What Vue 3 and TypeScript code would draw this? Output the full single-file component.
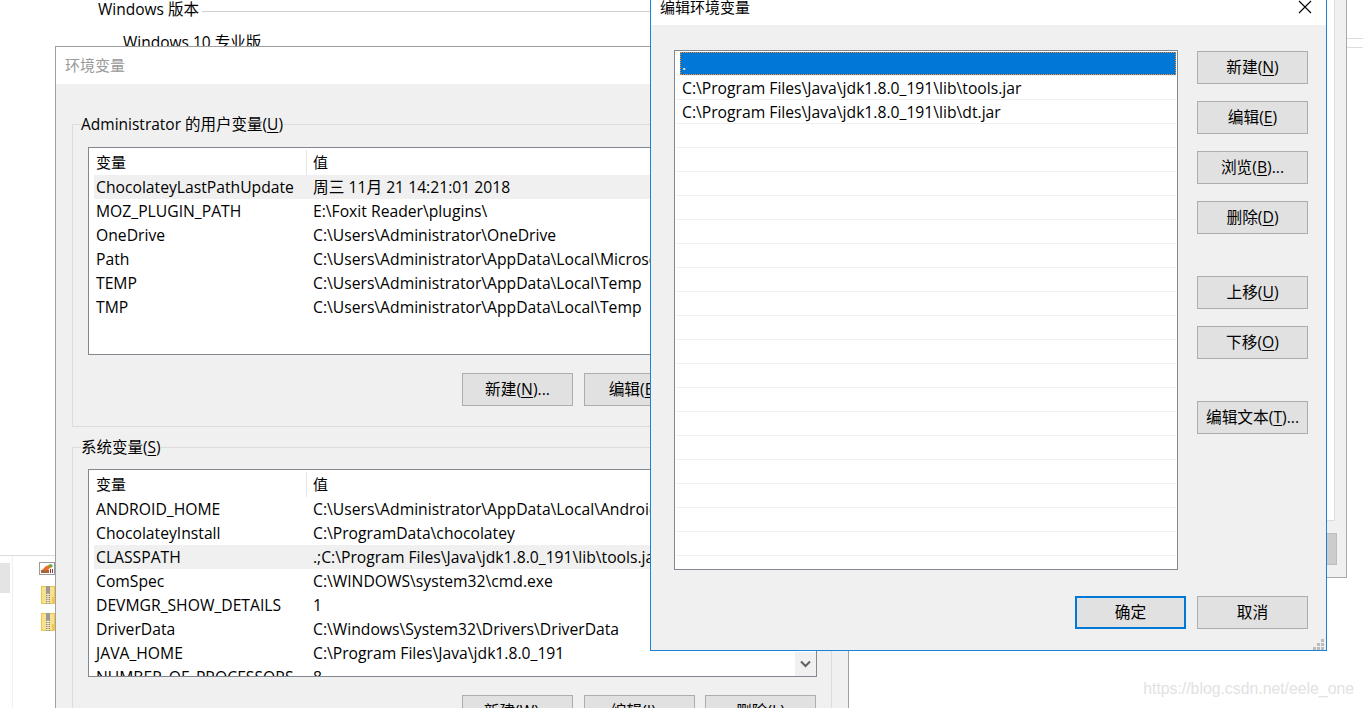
<script setup lang="ts">
interface EnvVar {
  name: string
  value: string
  hover?: boolean
}

const userVars: EnvVar[] = [
  { name: 'ChocolateyLastPathUpdate', value: '周三 11月 21 14:21:01 2018', hover: true },
  { name: 'MOZ_PLUGIN_PATH', value: 'E:\\Foxit Reader\\plugins\\' },
  { name: 'OneDrive', value: 'C:\\Users\\Administrator\\OneDrive' },
  { name: 'Path', value: 'C:\\Users\\Administrator\\AppData\\Local\\Microsoft\\WindowsApps' },
  { name: 'TEMP', value: 'C:\\Users\\Administrator\\AppData\\Local\\Temp' },
  { name: 'TMP', value: 'C:\\Users\\Administrator\\AppData\\Local\\Temp' }
]

const sysVars: EnvVar[] = [
  { name: 'ANDROID_HOME', value: 'C:\\Users\\Administrator\\AppData\\Local\\Android\\Sdk' },
  { name: 'ChocolateyInstall', value: 'C:\\ProgramData\\chocolatey' },
  { name: 'CLASSPATH', value: '.;C:\\Program Files\\Java\\jdk1.8.0_191\\lib\\tools.jar;C:\\Program Files', hover: true },
  { name: 'ComSpec', value: 'C:\\WINDOWS\\system32\\cmd.exe' },
  { name: 'DEVMGR_SHOW_DETAILS', value: '1' },
  { name: 'DriverData', value: 'C:\\Windows\\System32\\Drivers\\DriverData' },
  { name: 'JAVA_HOME', value: 'C:\\Program Files\\Java\\jdk1.8.0_191' },
  { name: 'NUMBER_OF_PROCESSORS', value: '8' }
]

const pathEntries: string[] = [
  '.',
  'C:\\Program Files\\Java\\jdk1.8.0_191\\lib\\tools.jar',
  'C:\\Program Files\\Java\\jdk1.8.0_191\\lib\\dt.jar',
  ...Array<string>(18).fill('')
]

const sideButtons = [
  { label: '新建(', key: 'N', tail: ')' },
  { label: '编辑(', key: 'E', tail: ')' },
  { label: '浏览(', key: 'B', tail: ')...' },
  { label: '删除(', key: 'D', tail: ')' },
  { label: '上移(', key: 'U', tail: ')', spaced: true },
  { label: '下移(', key: 'O', tail: ')' },
  { label: '编辑文本(', key: 'T', tail: ')...', spaced: true }
]

const gripDots: number[][] = [[8, 0], [4, 4], [8, 4], [0, 8], [4, 8], [8, 8]]
</script>

<template>
  <div class="desktop">
    <!-- windows behind the dialogs -->
    <div class="about">
      <div class="about-head"><span>Windows 版本</span><i></i></div>
      <div class="about-edition">Windows 10 专业版</div>
    </div>

    <div class="explorer">
      <div class="explorer-side">
        <div class="explorer-sel"></div>
      </div>
      <div class="explorer-files">
        <svg width="16" height="13" viewBox="0 0 16 13">
          <rect x="0.5" y="0.5" width="15" height="12" fill="#fff" stroke="#9a9a9a" />
          <rect x="2" y="8" width="8" height="3" fill="#a5673a" />
          <path d="M3 8l4-4 4-1 1 2-3 3z" fill="#e8702a" />
          <path d="M9 3l3-1 2 2-2 2z" fill="#6fa83a" />
          <rect x="11" y="7" width="1" height="4" fill="#c22" />
          <rect x="13" y="7" width="1" height="4" fill="#555" />
        </svg>
        <svg v-for="n in 2" :key="n" class="zip" width="14" height="18" viewBox="0 0 14 18">
          <rect x="0.5" y="0.5" width="13" height="17" fill="#f8e08c" stroke="#e9c64c" />
          <rect x="11" y="11" width="3" height="7" fill="#eec94f" />
          <rect x="5" y="0" width="4" height="7" fill="#9a9a9a" />
          <path d="M7 7v11" stroke="#8a8a8a" stroke-dasharray="1 1" stroke-width="4" />
          <path d="M7 7v11" stroke="#e8e8e8" stroke-width="1" />
        </svg>
      </div>
    </div>

    <div class="backdrop">
      <div class="backdrop-strip"></div>
      <div class="backdrop-btn"></div>
    </div>
    <div class="backdrop-lines"><i></i><i></i></div>

    <!-- 环境变量 -->
    <div class="env">
      <div class="env-title">环境变量</div>
      <div class="env-body">
        <fieldset class="group">
          <legend>Administrator 的用户变量(<u>U</u>)</legend>
          <div class="vars">
            <div class="vars-head"><span>变量</span><span class="col2">值</span></div>
            <div v-for="v in userVars" :key="v.name" class="vars-row" :class="{ hover: v.hover }">
              <span>{{ v.name }}</span><span class="col2">{{ v.value }}</span>
            </div>
          </div>
          <div class="env-actions">
            <button class="btn">新建(<u>N</u>)...</button>
            <button class="btn">编辑(<u>E</u>)...</button>
            <button class="btn">删除(<u>D</u>)</button>
          </div>
        </fieldset>

        <fieldset class="group group-sys">
          <legend>系统变量(<u>S</u>)</legend>
          <div class="vars">
            <div class="vars-head"><span>变量</span><span class="col2">值</span></div>
            <div v-for="v in sysVars" :key="v.name" class="vars-row" :class="{ hover: v.hover }">
              <span>{{ v.name }}</span><span class="col2">{{ v.value }}</span>
            </div>
            <div class="scroll-down">
              <svg width="11" height="8" viewBox="0 0 11 8">
                <path d="M1 1.5l4.5 4.5 4.5-4.5" fill="none" stroke="#606060" stroke-width="2" />
              </svg>
            </div>
          </div>
          <div class="env-actions">
            <button class="btn">新建(<u>W</u>)...</button>
            <button class="btn">编辑(<u>I</u>)...</button>
            <button class="btn">删除(<u>L</u>)</button>
          </div>
        </fieldset>
      </div>
    </div>

    <!-- 编辑环境变量 -->
    <div class="dialog">
      <div class="dialog-title">
        <span>编辑环境变量</span>
        <svg width="14" height="14" viewBox="0 0 14 14">
          <path d="M1 1l12 12M13 1L1 13" stroke="#000" stroke-width="1.1" />
        </svg>
      </div>
      <div class="dialog-body">
        <div class="dialog-main">
          <ul class="paths">
            <li v-for="(p, i) in pathEntries" :key="i">
              <span :class="{ sel: i === 0 }">{{ p }}</span>
            </li>
          </ul>
          <div class="dialog-side">
            <button v-for="b in sideButtons" :key="b.key" class="btn" :class="{ spaced: b.spaced }">
              {{ b.label }}<u>{{ b.key }}</u>{{ b.tail }}
            </button>
          </div>
        </div>
        <div class="dialog-foot">
          <button class="btn primary">确定</button>
          <button class="btn">取消</button>
        </div>
      </div>
      <svg class="grip" width="11" height="11" viewBox="0 0 11 11">
        <rect v-for="(d, i) in gripDots" :key="i" :x="d[0]" :y="d[1]" width="3" height="3" fill="#bcbcbc" />
      </svg>
    </div>

    <div class="watermark">https://blog.csdn.net/eele_one</div>
  </div>
</template>

<style scoped>
.desktop {
  position: relative;
  width: 1363px;
  height: 708px;
  overflow: hidden;
  background: #fff;
  color: #000;
  font-family: "Open Sans", "Noto Sans CJK SC", sans-serif;
  font-size: 15.7px;
}

u {
  text-underline-offset: 2px;
}

/* back windows */
.about {
  position: absolute;
  left: 98px;
  top: 0;
  width: 600px;
  font-size: 15.5px;
}

.about-head {
  display: flex;
  align-items: center;
  height: 16px;
  gap: 3px;
  white-space: nowrap;
}

.about-head i {
  flex: 1;
  height: 1px;
  margin-top: 6px;
  background: #d0d0d0;
}

.about-edition {
  margin: 16px 0 0 25px;
  line-height: 20px;
}

.explorer {
  position: absolute;
  left: 0;
  top: 555px;
  width: 60px;
  height: 153px;
  display: flex;
  border-top: 1px solid #dcdcdc;
}

.explorer-side {
  width: 12px;
  border-right: 1px solid #f0f0f0;
  padding-top: 7px;
}

.explorer-sel {
  width: 10px;
  height: 30px;
  background: #e4e4e4;
}

.explorer-files {
  display: flex;
  flex-direction: column;
  padding: 6px 0 0 26px;
}

.zip {
  margin: 11px 0 0 2px;
}

.zip + .zip {
  margin-top: 9px;
}

.backdrop {
  position: absolute;
  left: 1300px;
  top: 0;
  width: 46px;
  height: 577px;
  background: #f0f0f0;
  border-right: 1px solid #a9a9a9;
  border-bottom: 1px solid #a9a9a9;
}

.backdrop-strip {
  width: 34px;
  height: 520px;
  background: #fff;
  border-right: 1px solid #dcdcdc;
  border-bottom: 1px solid #dcdcdc;
}

.backdrop-btn {
  width: 37px;
  height: 32px;
  margin-top: 12px;
  background: #ccc;
  border: 1px solid #bdbdbd;
  box-sizing: border-box;
}

.backdrop-lines {
  position: absolute;
  left: 1347px;
  top: 38px;
  width: 16px;
}

.backdrop-lines i {
  display: block;
  height: 1px;
  margin-bottom: 8px;
  background: #dcdcdc;
}

/* environment variables window */
.env {
  position: absolute;
  left: 55px;
  top: 46px;
  width: 794px;
  height: 700px;
  box-sizing: border-box;
  background: #f0f0f0;
  border: 1px solid #a0a0a0;
}

.env-title {
  height: 37px;
  padding-left: 9px;
  line-height: 37px;
  background: #fff;
  color: #999;
  font-size: 15px;
}

.env-body {
  padding: 28px 16px 0;
}

.group {
  margin: 0 0 8px;
  padding: 11px 14px 20px 15px;
  border: 1px solid #dcdcdc;
  min-width: 0;
}

.group-sys {
  padding-top: 10px;
}

.group legend {
  margin-left: -7px;
  padding: 0;
  line-height: 24px;
  white-space: nowrap;
  font-size: 15.5px;
}

.vars {
  position: relative;
  height: 208px;
  box-sizing: border-box;
  padding: 2px 0 0 5px;
  background: #fff;
  border: 1px solid #828790;
  overflow: hidden;
  white-space: nowrap;
}

.vars-head,
.vars-row {
  display: flex;
  height: 24px;
  line-height: 24px;
}

.vars-head {
  height: 25px;
  font-size: 15px;
  line-height: 25px;
}

.vars-head > span:first-child,
.vars-row > span:first-child {
  width: 212px;
  flex-shrink: 0;
  box-sizing: border-box;
  padding-left: 2px;
}

.col2 {
  padding-left: 7px;
}

.vars-head .col2 {
  flex: 1;
  border-left: 1px solid #e5e5e5;
  padding-left: 6px;
}

.vars-row.hover {
  background: #f0f0f0;
}

.scroll-down {
  position: absolute;
  right: 0;
  bottom: 0;
  width: 21px;
  height: 24px;
  background: #f0f0f0;
  display: flex;
  align-items: center;
  justify-content: center;
}

.env-actions {
  display: flex;
  justify-content: flex-end;
  gap: 10px;
  margin-top: 18px;
  padding-right: 1px;
}

.env-actions .btn:first-child {
  margin-right: 1px;
}

.btn {
  width: 111px;
  height: 33px;
  padding: 0 0 2px;
  box-sizing: border-box;
  background: #e1e1e1;
  border: 1px solid #adadad;
  font: inherit;
  color: #000;
}

.btn.primary {
  border: 2px solid #0078d7;
}

/* edit dialog */
.dialog {
  position: absolute;
  left: 650px;
  top: -12px;
  width: 677px;
  height: 663px;
  box-sizing: border-box;
  background: #f0f0f0;
  border: 1px solid #1883d7;
}

.dialog-title {
  display: flex;
  align-items: flex-start;
  justify-content: space-between;
  height: 36px;
  padding: 7px 14px 0 9px;
  box-sizing: border-box;
  background: #fff;
  font-size: 15px;
}

.dialog-title svg {
  margin-top: 4px;
}

.dialog-body {
  padding: 25px 18px 0 23px;
}

.dialog-main {
  display: flex;
  gap: 19px;
}

.paths {
  width: 504px;
  height: 520px;
  box-sizing: border-box;
  margin: 0;
  padding: 1px 1px 0 1px;
  list-style: none;
  background: #fff;
  border: 1px solid #828790;
  overflow: hidden;
}

.paths li {
  height: 24px;
  box-sizing: border-box;
  border-bottom: 1px solid #f0f0f0;
  line-height: 25px;
  padding-left: 4px;
}

.paths li span {
  display: block;
  height: 23px;
  padding-left: 2px;
  white-space: nowrap;
}

.paths li span.sel {
  background: #0078d7;
  color: #fff;
  outline: 1px dotted #ff8728;
  outline-offset: -1px;
}

.dialog-side {
  display: flex;
  flex-direction: column;
  gap: 17px;
  padding-top: 1px;
}

.btn.spaced {
  margin-top: 25px;
}

.dialog-foot {
  display: flex;
  justify-content: flex-end;
  gap: 11px;
  margin-top: 26px;
}

.grip {
  position: absolute;
  right: 2px;
  bottom: 0;
}

.watermark {
  position: absolute;
  right: 9px;
  top: 680px;
  font-family: "Liberation Sans", sans-serif;
  font-size: 15.8px;
  color: #e2e2e2;
}
</style>
